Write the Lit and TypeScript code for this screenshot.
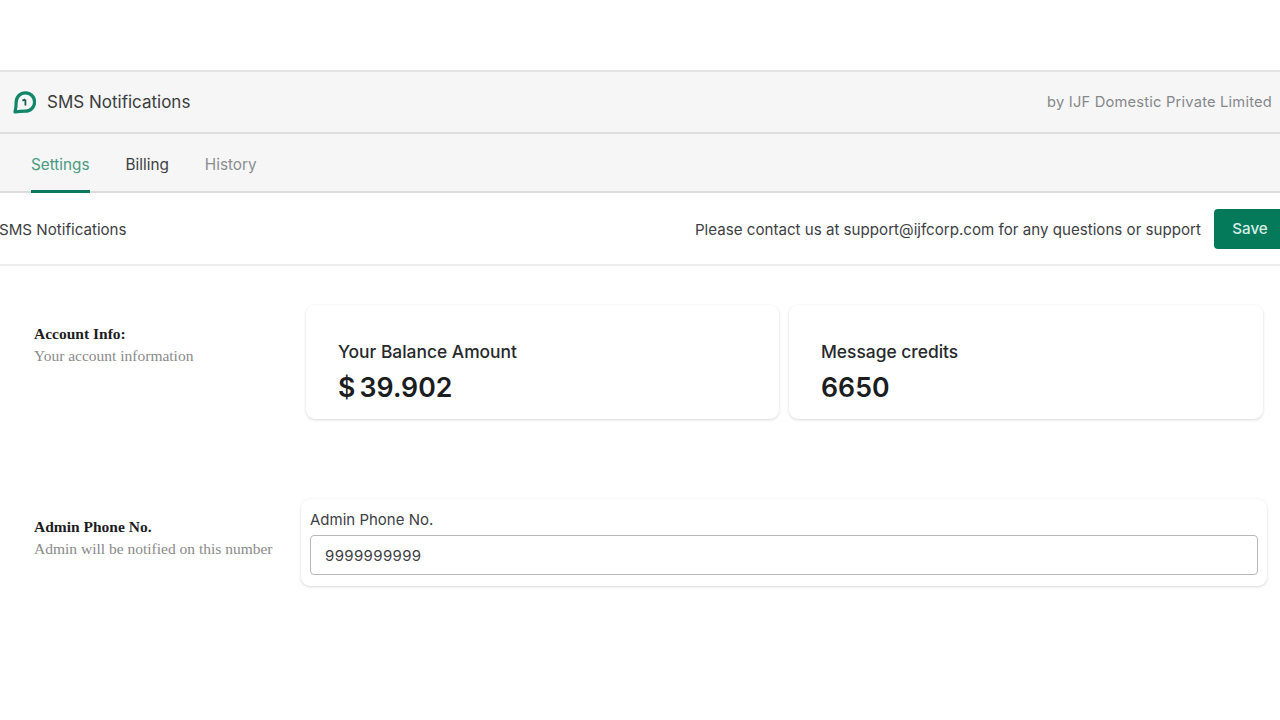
import { LitElement, html, css } from 'lit';
import { customElement } from 'lit/decorators.js';

@customElement('app-root')
export class AppRoot extends LitElement {
  static styles = css`
    :host {
      display: block;
      width: 1280px;
      height: 720px;
      overflow: hidden;
      background: #fff;
      font-family: Inter, 'Liberation Sans', sans-serif;
      color: #2b2f33;
    }

    .top-gap {
      height: 70px;
    }

    .app-header {
      box-sizing: border-box;
      height: 64px;
      display: flex;
      align-items: center;
      justify-content: space-between;
      padding: 0 8px 0 13px;
      background: #f6f6f6;
      border-top: 2px solid #e4e4e4;
      border-bottom: 2px solid #dedede;
    }

    .brand {
      display: flex;
      align-items: center;
      gap: 11px;
      font-size: 17px;
      color: #3a3d40;
    }

    .brand svg {
      display: block;
    }

    .vendor {
      font-size: 14.7px;
      color: #85888b;
      letter-spacing: 0.2px;
    }

    .tabs {
      box-sizing: border-box;
      height: 59px;
      display: flex;
      gap: 36px;
      padding-left: 31px;
      background: #f6f6f6;
      border-bottom: 2px solid #dcdcdc;
    }

    .tab {
      box-sizing: border-box;
      height: 59px;
      display: flex;
      align-items: center;
      padding-top: 1px;
      font-size: 15.3px;
      color: #3d4043;
    }

    .tab.active {
      color: #4b9a82;
      border-bottom: 3px solid #0b7a5c;
      padding-top: 4px;
    }

    .tab.muted {
      color: #8b8e91;
    }

    .page-bar {
      box-sizing: border-box;
      height: 73px;
      display: flex;
      align-items: center;
      justify-content: space-between;
      border-bottom: 2px solid #ececec;
      font-size: 15.13px;
      color: #3d4043;
    }

    .page-bar .title {
      margin-left: -1px;
      padding-top: 1px;
    }

    .actions {
      display: flex;
      align-items: center;
      gap: 13px;
    }

    .actions span {
      padding-top: 1px;
    }

    .save {
      box-sizing: border-box;
      width: 72px;
      height: 40px;
      margin-right: -6px;
      padding: 0;
      border: none;
      border-radius: 4px;
      background: #047a5b;
      color: #d8efe6;
      font: 500 15.2px Inter, 'Liberation Sans', sans-serif;
    }

    .content {
      display: flex;
      flex-direction: column;
      gap: 80px;
      padding: 39px 0 0 34px;
    }

    .section {
      display: grid;
      grid-template-columns: 267px 1fr;
    }

    .info {
      font-family: 'Liberation Serif', serif;
      padding-top: 20px;
    }

    .section + .section .info {
      padding-top: 19px;
    }

    .info h3 {
      margin: 0 0 4px;
      font-size: 15.5px;
      line-height: 18px;
      font-weight: 700;
      color: #1d1d1f;
    }

    .info p {
      margin: 0;
      font-size: 15.5px;
      line-height: 18px;
      color: #8a8a8a;
    }

    .stats {
      display: grid;
      grid-template-columns: 473px 474px;
      gap: 10px;
      padding-left: 5px;
    }

    .stat {
      box-sizing: border-box;
      height: 114px;
      padding: 37px 32px 0;
      border-radius: 9px;
      background: #fff;
      box-shadow: 0 1px 3px rgba(0, 0, 0, 0.16);
    }

    .stat .label {
      font-size: 17.4px;
      line-height: 20px;
      font-weight: 500;
      color: #26292c;
    }

    .stat .value {
      margin-top: 9px;
      font-size: 26.7px;
      line-height: 33px;
      font-weight: 600;
      word-spacing: -2.5px;
      color: #1b1d1f;
    }

    .phone-card {
      box-sizing: border-box;
      height: 87px;
      margin-right: 13px;
      padding: 12px 9px 0;
      border-radius: 9px;
      background: #fff;
      box-shadow: 0 1px 3px rgba(0, 0, 0, 0.16);
    }

    .phone-card label {
      display: block;
      font-size: 15px;
      line-height: 18px;
      color: #3d4043;
      margin-bottom: 6px;
    }

    .phone-card .input {
      box-sizing: border-box;
      height: 40px;
      padding: 0 14px;
      display: flex;
      align-items: center;
      border: 1px solid #b5b7b9;
      border-radius: 4px;
      font-size: 15px;
      letter-spacing: 0.35px;
      color: #3d4043;
    }
  `;

  render() {
    return html`
      <div class="top-gap"></div>
      <header class="app-header">
        <div class="brand">
          <svg width="23" height="23" viewBox="0 0 23 23">
            <path
              d="M12.4 1.8a9.2 9.2 0 1 1 0 18.4 Q7 20.2 2 21 Q3.2 16 3.2 11 A9.2 9.2 0 0 1 12.4 1.8Z"
              fill="none"
              stroke="#11866a"
              stroke-width="3.2"
              stroke-linejoin="round"
            />
            <path
              d="M9.4 9.6l2.8-1.2M12.4 8.4v6"
              fill="none"
              stroke="#1d5f50"
              stroke-width="1.8"
            />
          </svg>
          <span>SMS Notifications</span>
        </div>
        <div class="vendor">by IJF Domestic Private Limited</div>
      </header>
      <nav class="tabs">
        <div class="tab active">Settings</div>
        <div class="tab">Billing</div>
        <div class="tab muted">History</div>
      </nav>
      <div class="page-bar">
        <div class="title">SMS Notifications</div>
        <div class="actions">
          <span>Please contact us at support@ijfcorp.com for any questions or support</span>
          <button class="save">Save</button>
        </div>
      </div>
      <main class="content">
        <section class="section">
          <div class="info">
            <h3>Account Info:</h3>
            <p>Your account information</p>
          </div>
          <div class="stats">
            <div class="stat">
              <div class="label">Your Balance Amount</div>
              <div class="value">$ 39.902</div>
            </div>
            <div class="stat">
              <div class="label">Message credits</div>
              <div class="value">6650</div>
            </div>
          </div>
        </section>
        <section class="section">
          <div class="info">
            <h3>Admin Phone No.</h3>
            <p>Admin will be notified on this number</p>
          </div>
          <div class="phone-card">
            <label>Admin Phone No.</label>
            <div class="input">9999999999</div>
          </div>
        </section>
      </main>
    `;
  }
}
